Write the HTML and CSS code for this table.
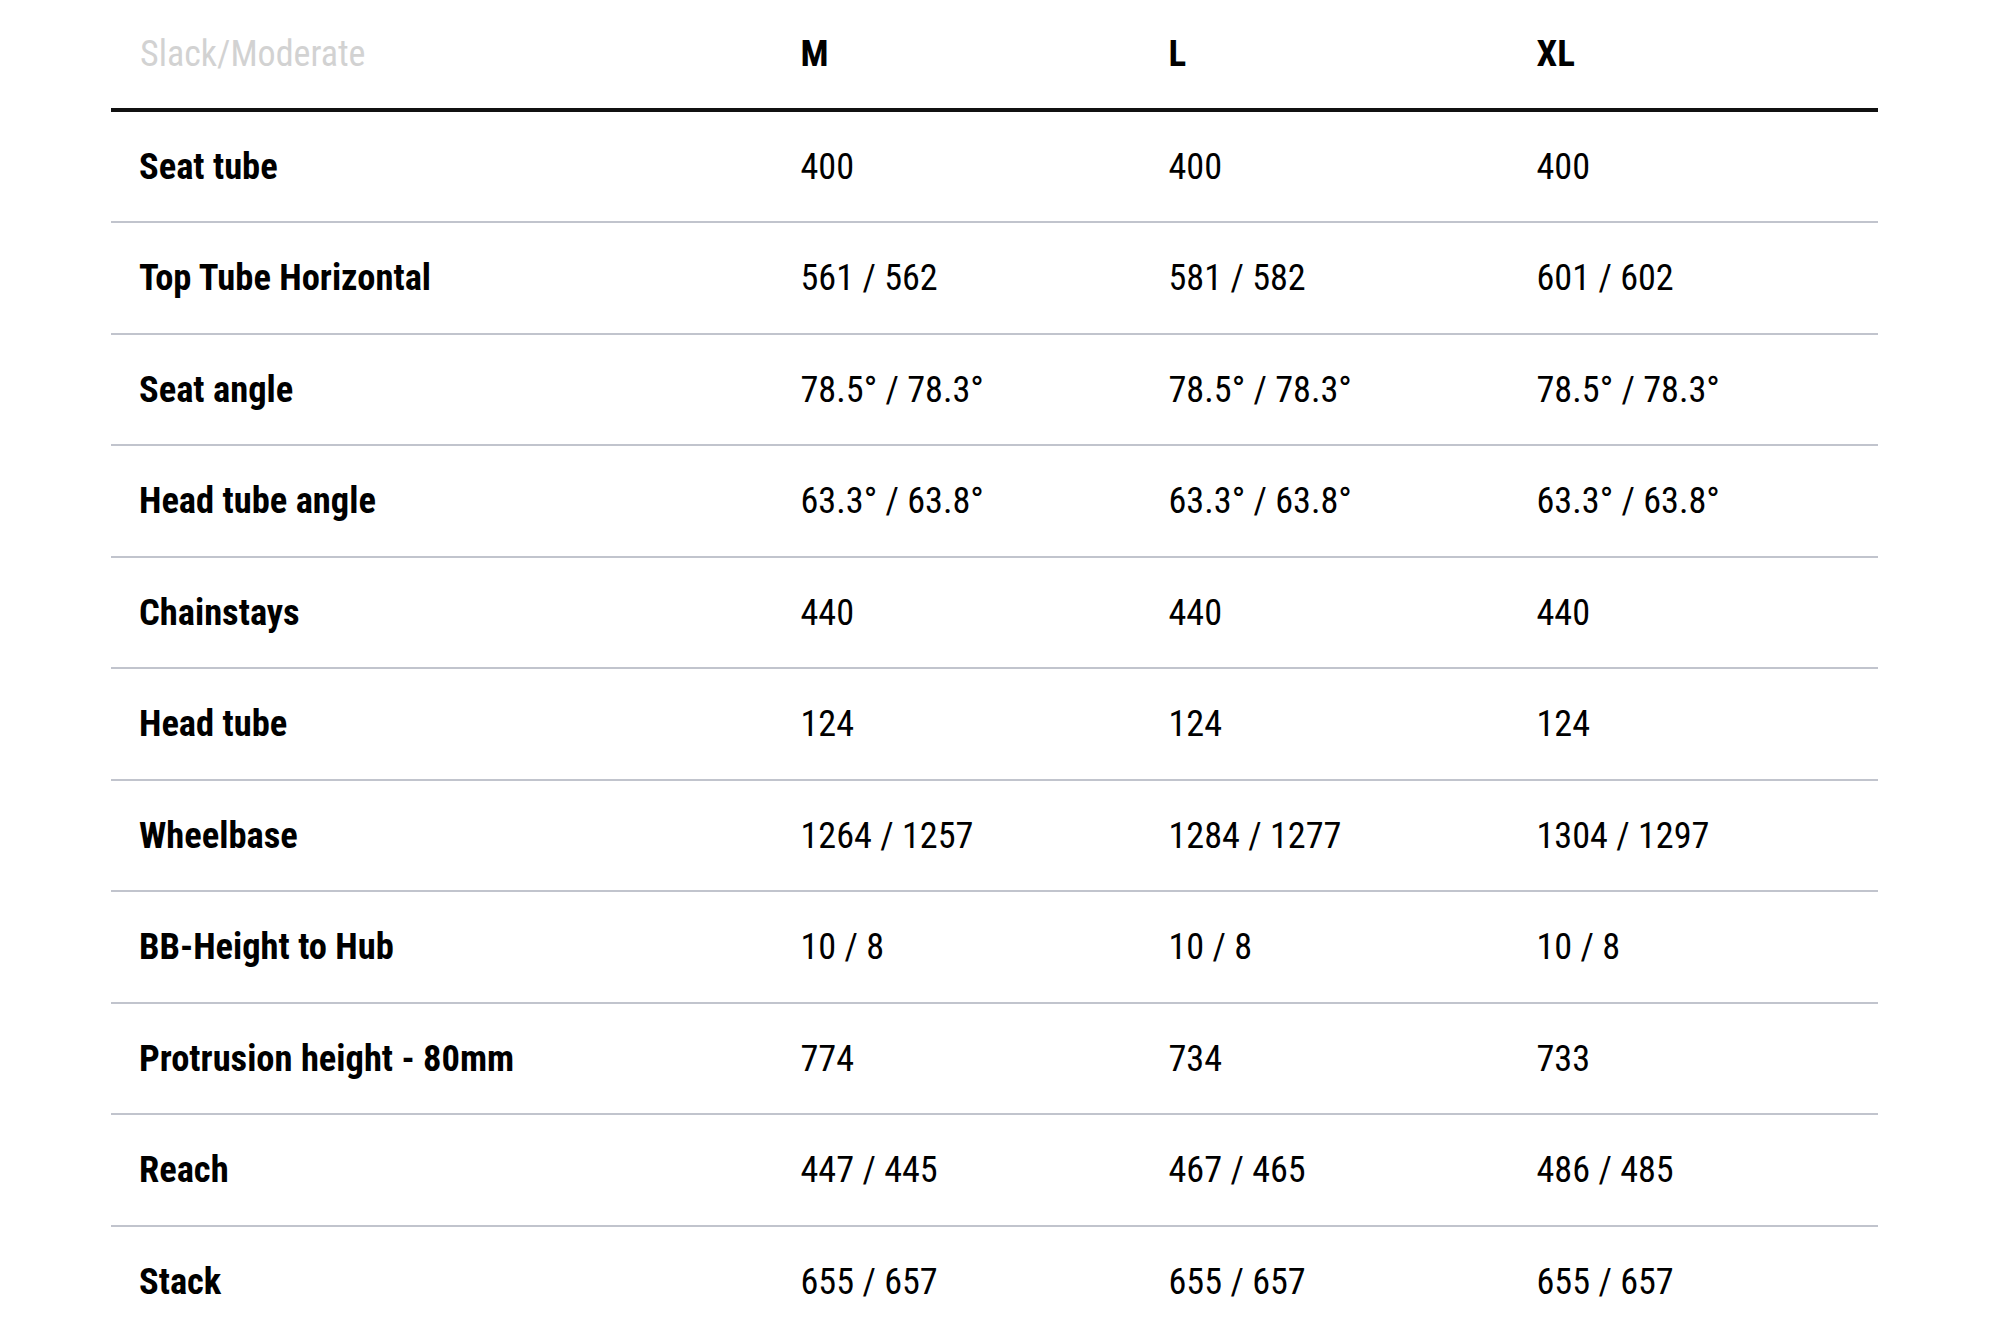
FILE: index.html
```html
<!DOCTYPE html>
<html lang="en">
<head>
<meta charset="utf-8">
<title>Geometry</title>
<link rel="stylesheet" href="styles.css">
</head>
<body>
<div class="geo">
  <div class="row head">
    <div class="cell label muted">Slack/Moderate</div>
    <div class="cell size">M</div>
    <div class="cell size">L</div>
    <div class="cell size">XL</div>
  </div>
  <div class="row"><div class="cell label">Seat tube</div><div class="cell val">400</div><div class="cell val">400</div><div class="cell val">400</div></div>
  <div class="row"><div class="cell label">Top Tube Horizontal</div><div class="cell val">561 / 562</div><div class="cell val">581 / 582</div><div class="cell val">601 / 602</div></div>
  <div class="row"><div class="cell label">Seat angle</div><div class="cell val">78.5° / 78.3°</div><div class="cell val">78.5° / 78.3°</div><div class="cell val">78.5° / 78.3°</div></div>
  <div class="row"><div class="cell label">Head tube angle</div><div class="cell val">63.3° / 63.8°</div><div class="cell val">63.3° / 63.8°</div><div class="cell val">63.3° / 63.8°</div></div>
  <div class="row"><div class="cell label">Chainstays</div><div class="cell val">440</div><div class="cell val">440</div><div class="cell val">440</div></div>
  <div class="row"><div class="cell label">Head tube</div><div class="cell val">124</div><div class="cell val">124</div><div class="cell val">124</div></div>
  <div class="row"><div class="cell label">Wheelbase</div><div class="cell val">1264 / 1257</div><div class="cell val">1284 / 1277</div><div class="cell val">1304 / 1297</div></div>
  <div class="row"><div class="cell label">BB-Height to Hub</div><div class="cell val">10 / 8</div><div class="cell val">10 / 8</div><div class="cell val">10 / 8</div></div>
  <div class="row"><div class="cell label">Protrusion height - 80mm</div><div class="cell val">774</div><div class="cell val">734</div><div class="cell val">733</div></div>
  <div class="row"><div class="cell label">Reach</div><div class="cell val">447 / 445</div><div class="cell val">467 / 465</div><div class="cell val">486 / 485</div></div>
  <div class="row"><div class="cell label">Stack</div><div class="cell val">655 / 657</div><div class="cell val">655 / 657</div><div class="cell val">655 / 657</div></div>
</div>
</body>
</html>
```
FILE: styles.css
```css
html, body {
  margin: 0;
  padding: 0;
  background: #ffffff;
}

body {
  font-family: "Roboto Condensed", "Liberation Sans Narrow", "Arial Narrow", Roboto, sans-serif;
  color: #000000;
}

.geo {
  width: 1767px;
  margin-left: 111px;
}

.row {
  display: grid;
  grid-template-columns: 662.5px 368px 368px 368.5px;
  align-items: center;
  height: 109.5px;
  border-bottom: 2px solid #c1c4cd;
}

.row.head {
  height: 107.5px;
  border-bottom: 4px solid #111111;
}

.cell {
  padding-left: 27px;
  white-space: nowrap;
}

.label {
  padding-left: 28px;
  font-size: 36.5px;
  font-weight: 700;
}

.muted {
  padding-left: 29px;
  color: #d2d2d2;
  font-weight: 400;
  font-size: 36px;
}

.size {
  font-size: 37px;
  font-weight: 700;
}

.val {
  font-size: 36.2px;
  font-weight: 400;
}
```
